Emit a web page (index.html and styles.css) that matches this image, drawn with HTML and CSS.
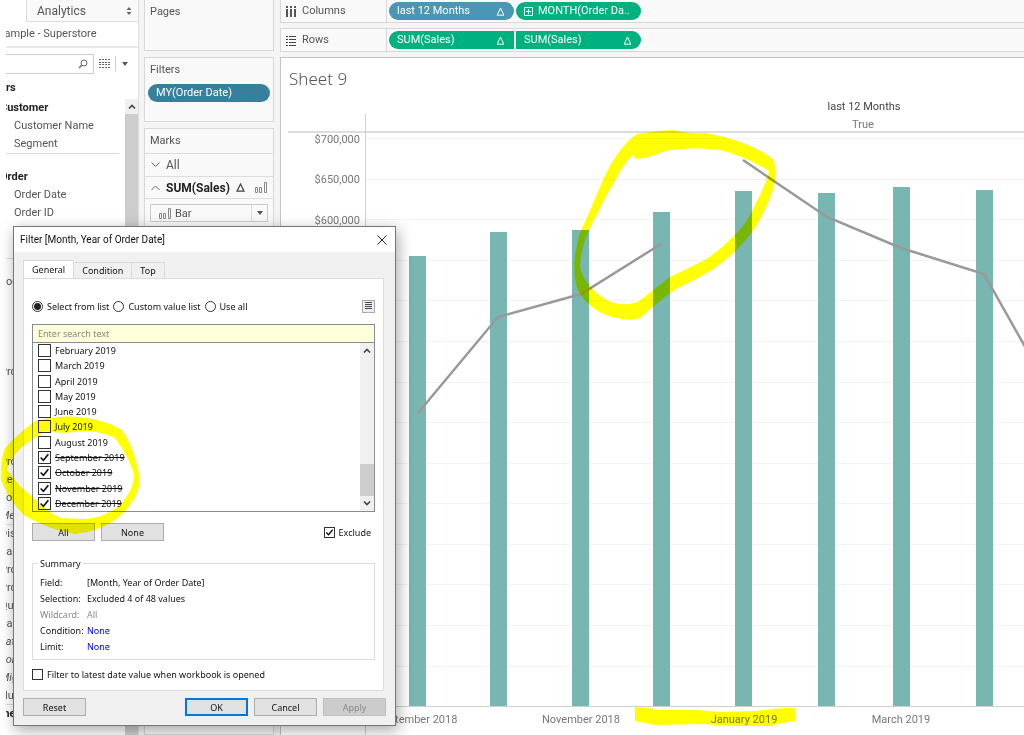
FILE: index.html
```html
<!DOCTYPE html>
<html lang="en">
<head>
    <meta charset="UTF-8">
    <title>Sheet 9</title>
    <link rel="stylesheet" href="styles.css">
</head>
<body>
<div class="workbook">
    <aside class="dataPane">
        <div class="paneTabs">
            <button class="paneTab">Analytics
                <svg width="6" height="8" viewBox="0 0 6 8"><path d="M3 0L5.5 3H.5zM3 8L.5 5h5z" fill="#666"/></svg>
            </button>
        </div>
        <div class="source">Sample - Superstore</div>
        <div class="searchRow">
            <label class="fieldSearch">
                <input type="text" aria-label="Search fields">
                <svg width="10" height="10" viewBox="0 0 10 10" fill="none" stroke="#666"><circle cx="6" cy="4" r="3"/><path d="M4 6L1 9" stroke-width="1.5"/></svg>
            </label>
            <svg width="11" height="9" viewBox="0 0 11 9" fill="none" stroke="#666" stroke-width="1"><path d="M0 .5h11M0 3.5h11M0 5.5h11M0 8.5h11" stroke-dasharray="2 1"/></svg>
            <i class="divider"></i>
            <svg width="6" height="4" viewBox="0 0 6 4"><path d="M0 0h6L3 4z" fill="#555"/></svg>
        </div>
        <div class="tables">rs</div>
        <div class="fields">
            <ul class="fieldList">
                <li class="group">Customer</li>
                <li class="sub">Customer Name</li>
                <li class="sub">Segment</li>
                <li class="gap"></li>
                <li class="group">Order</li>
                <li class="sub">Order Date</li>
                <li class="sub">Order ID</li>
                <li></li>
                <li></li>
                <li class="gap"></li>
                <li>Loc</li>
                <li></li>
                <li></li>
                <li></li>
                <li></li>
                <li>Pro</li>
                <li></li>
                <li></li>
                <li></li>
                <li></li>
                <li>Pro</li>
                <li>Reg</li>
                <li>Top</li>
                <li class="calc last">Mea</li>
                <li>Dis</li>
                <li>Eas</li>
                <li>Pro</li>
                <li>Pro</li>
                <li>Qu</li>
                <li>Sal</li>
                <li class="calc">Lat</li>
                <li class="calc">Lon</li>
                <li class="calc">Mig</li>
                <li class="last">Nu</li>
                <li class="group">me</li>
            </ul>
            <div class="paneScroll">
                <button aria-label="Scroll up"><svg width="8" height="5" viewBox="0 0 8 5" fill="none" stroke="#444" stroke-width="1.6"><path d="M1 4.5l3-3 3 3"/></svg></button>
            </div>
        </div>
    </aside>

    <section class="cards">
        <div class="card pages"><h2>Pages</h2></div>
        <div class="card filters">
            <h2>Filters</h2>
            <button class="pill dark">MY(Order Date)</button>
        </div>
        <div class="card marks">
            <h2>Marks</h2>
            <div class="markRow">
                <svg width="9" height="6" viewBox="0 0 9 6" fill="none" stroke="#666"><path d="M.5.5l4 4 4-4"/></svg>
                <span>All</span>
            </div>
            <div class="markRow active">
                <svg width="9" height="6" viewBox="0 0 9 6" fill="none" stroke="#666"><path d="M.5 5l4-4 4 4"/></svg>
                <span>SUM(Sales)</span>
                <svg class="delta" width="9" height="9" viewBox="0 0 9 9" fill="none" stroke="#444" stroke-width="1.2"><path d="M4.5 1L8 8.2H1z"/></svg>
                <svg width="12" height="11" viewBox="0 0 12 11" fill="none" stroke="#888"><path d="M.5 5.5h2v5h-2zM4.5 5.5h2v5h-2zM9.5.5h2v10h-2z"/></svg>
            </div>
            <div class="markType">
                <svg width="12" height="11" viewBox="0 0 12 11" fill="none" stroke="#888"><path d="M.5 5.5h2v5h-2zM4.5 5.5h2v5h-2zM9.5.5h2v10h-2z"/></svg>
                <select aria-label="Mark type"><option>Bar</option></select>
                <svg class="caret" width="6" height="4" viewBox="0 0 6 4"><path d="M0 0h6L3 4z" fill="#555"/></svg>
            </div>
        </div>
    </section>

    <main class="view">
        <div class="shelf">
            <div class="shelfName">
                <svg width="10" height="11" viewBox="0 0 10 11" fill="none" stroke="#555" stroke-width="2"><path d="M1 0v2M5 0v2M9 0v2M1 3v8M5 3v8M9 3v8"/></svg>
                Columns
            </div>
            <button class="pill blue">last 12 Months
                <svg width="9" height="9" viewBox="0 0 9 9" fill="none" stroke="#fff"><path d="M4.5 1L7.8 8.2H1.2z"/></svg>
            </button>
            <button class="pill green month">
                <svg width="9" height="9" viewBox="0 0 9 9" fill="none" stroke="#fff"><path d="M.5.5h8v8h-8zM2 4.5h5M4.5 2v5"/></svg>
                MONTH(Order Da..
            </button>
        </div>
        <div class="shelf">
            <div class="shelfName">
                <svg width="10" height="11" viewBox="0 0 10 11" fill="none" stroke="#444"><path d="M0 1.5h2M3 1.5h7M0 4.5h2M3 4.5h7M0 7.5h2M3 7.5h7M0 10.5h2M3 10.5h7"/></svg>
                Rows
            </div>
            <button class="pill green flatRight">SUM(Sales)
                <svg width="9" height="9" viewBox="0 0 9 9" fill="none" stroke="#fff"><path d="M4.5 1L7.8 8.2H1.2z"/></svg>
            </button>
            <button class="pill green flatLeft">SUM(Sales)
                <svg width="9" height="9" viewBox="0 0 9 9" fill="none" stroke="#fff"><path d="M4.5 1L7.8 8.2H1.2z"/></svg>
            </button>
        </div>
        <div class="sheet">
            <h1>Sheet 9</h1>
            <svg class="chart" role="img" aria-label="Sales by month">
                <!-- grid -->
                <g stroke="#f3f3f3">
                    <path d="M85 40.5H2000M85 81.5H2000M85 121.5H2000M85 162.5H2000M85 202.5H2000M85 243.5H2000M85 284.5H2000M85 324.5H2000M85 365.5H2000M85 405.5H2000M85 446.5H2000M85 486.5H2000M85 527.5H2000M85 568.5H2000"/>
                </g>
                <path d="M8 34H2000" stroke="#ddd" stroke-width="2"/>
                <path d="M85.5 16V640M85 608.5H2000" stroke="#d0d0d0"/>
                <path d="M137.5 609v4M300.5 609v4M462.5 609v4M620.5 609v4" stroke="#eee"/>
                <!-- bars -->
                <g fill="#78b6b1">
                    <rect x="129" y="158" width="17" height="450"/>
                    <rect x="210" y="134" width="17" height="474"/>
                    <rect x="292" y="132" width="17" height="476"/>
                    <rect x="373" y="114" width="17" height="494"/>
                    <rect x="455" y="93" width="17" height="515"/>
                    <rect x="538" y="95" width="17" height="513"/>
                    <rect x="613" y="89" width="17" height="519"/>
                    <rect x="696" y="92" width="17" height="516"/>
                </g>
                <g fill="none" stroke="#999" stroke-width="2.5">
                    <path d="M138 315L218 219 301 196 381 146"/>
                    <path d="M463 62L547 119 621 150 704 176 748 254"/>
                </g>
                <g class="axis" text-anchor="end">
                    <text x="80" y="45">$700,000</text>
                    <text x="80" y="85">$650,000</text>
                    <text x="80" y="126">$600,000</text>
                </g>
                <g class="axis" text-anchor="middle">
                    <text class="head" x="584" y="12">last 12 Months</text>
                    <text x="583" y="30">True</text>
                    <text x="137" y="625">September 2018</text>
                    <text x="301" y="625">November 2018</text>
                    <text x="464" y="625">January 2019</text>
                    <text x="621" y="625">March 2019</text>
                </g>
            </svg>
        </div>
    </main>
</div>

<form class="dialog" role="dialog" aria-labelledby="dialogTitle">
    <header class="titleBar">
        <span id="dialogTitle">Filter [Month, Year of Order Date]</span>
        <button type="button" aria-label="Close"><svg width="10" height="10" viewBox="0 0 10 10" stroke="#222"><path d="M.5.5l9 9M9.5.5l-9 9"/></svg></button>
    </header>
    <div class="tabs">
        <button type="button" class="tab on">General</button>
        <button type="button" class="tab">Condition</button>
        <button type="button" class="tab">Top</button>
    </div>
    <div class="panel">
        <div class="modes">
            <label><input type="radio" name="mode" checked>Select from list</label>
            <label><input type="radio" name="mode">Custom value list</label>
            <label><input type="radio" name="mode">Use all</label>
            <button type="button" class="menuBn" aria-label="Options"><svg width="7" height="8" viewBox="0 0 7 8" stroke="#3c4858"><path d="M0 .5h7M0 2.5h7M0 4.5h7M0 6.5h7"/></svg></button>
        </div>
        <div class="listBox">
            <input class="search" type="text" placeholder="Enter search text" aria-label="Enter search text">
            <div class="listBody">
                <ul class="months">
                    <li><label><input type="checkbox">February 2019</label></li>
                    <li><label><input type="checkbox">March 2019</label></li>
                    <li><label><input type="checkbox">April 2019</label></li>
                    <li><label><input type="checkbox">May 2019</label></li>
                    <li><label><input type="checkbox">June 2019</label></li>
                    <li><label><input type="checkbox">July 2019</label></li>
                    <li><label><input type="checkbox">August 2019</label></li>
                    <li><label><input type="checkbox" checked><s>September 2019</s></label></li>
                    <li><label><input type="checkbox" checked><s>October 2019</s></label></li>
                    <li><label><input type="checkbox" checked><s>November 2019</s></label></li>
                    <li><label><input type="checkbox" checked><s>December 2019</s></label></li>
                </ul>
                <div class="scroll">
                    <svg width="8" height="5" viewBox="0 0 8 5" fill="none" stroke="#444" stroke-width="1.6"><path d="M1 4.5l3-3 3 3"/></svg>
                    <i class="thumb"></i>
                    <svg width="8" height="5" viewBox="0 0 8 5" fill="none" stroke="#444" stroke-width="1.6"><path d="M1 .5l3 3 3-3"/></svg>
                </div>
            </div>
        </div>
        <div class="pick">
            <button type="button" class="bn">All</button>
            <button type="button" class="bn">None</button>
            <label class="exclude"><input type="checkbox" checked>Exclude</label>
        </div>
        <fieldset class="summary">
            <legend>Summary</legend>
            <dl>
                <dt>Field:</dt><dd>[Month, Year of Order Date]</dd>
                <dt>Selection:</dt><dd>Excluded 4 of 48 values</dd>
                <dt class="off">Wildcard:</dt><dd class="off">All</dd>
                <dt>Condition:</dt><dd><a href="#">None</a></dd>
                <dt>Limit:</dt><dd><a href="#">None</a></dd>
            </dl>
        </fieldset>
        <label class="latest"><input type="checkbox">Filter to latest date value when workbook is opened</label>
    </div>
    <footer class="actions">
        <button type="button" class="bn reset">Reset</button>
        <button type="button" class="bn ok">OK</button>
        <button type="button" class="bn">Cancel</button>
        <button type="button" class="bn" disabled>Apply</button>
    </footer>
</form>

<!-- marker pen -->
<svg class="pen" width="1024" height="735" fill="#ff0" fill-rule="evenodd" aria-hidden="true">
    <path d="M637 134Q655 131 673 130Q690 134 705 133Q730 137 750 146Q765 152 774 160Q777 178 773 190Q766 210 755 228Q735 255 712 270Q695 280 676 289Q660 300 640 318Q632 321 622 319Q605 316 598 311Q583 302 577 288Q572 270 576 250Q578 235 585 222L603 180Q618 147 637 134ZM635 159Q650 158 665 151Q690 146 720 150Q745 156 769 171Q768 180 755 205Q747 224 733 237Q720 250 705 260L670 277L638 302Q620 308 605 299Q596 294 591 287Q582 278 580 267Q580 250 590 228L604 200L618 175Q625 162 634 154Z"/>
    <path d="M35 421Q60 415 78 417Q104 419 122 430Q131 443 135 458Q142 478 138 490Q132 507 115 520Q97 532 75 534Q50 530 25 516Q10 502 1 480Q0 460 5 448Q18 434 35 421ZM45 431Q60 434 75 432Q98 429 115 438Q128 455 134 474Q134 490 120 505Q105 518 85 519L60 518Q48 512 38 502L20 486L7 470Q10 458 22 447Q35 437 45 431Z"/>
    <path d="M635 707L650 708 656 710H697L720 712 755 711 775 709 784 708H795V721L782 723 770 726H735L703 724 655 725 635 721Z"/>
</svg>
</body>
</html>
```
FILE: styles.css
```css
*{
    box-sizing: border-box;
    margin: 0;
    padding: 0;
}
body{
    background: #fff;
    color: #555;
    font: 11px/18px Roboto, "Noto Sans", sans-serif;
    overflow: hidden;
}
button,input,select{
    font: inherit;
    color: inherit;
    border: 0;
    background: none;
}
ul{
    list-style: none;
}
svg{
    flex: none;
}
.workbook{
    display: flex;
    height: 100vh;
    padding-left: 6px;
    background: #f4f4f4;
}

/* data pane */
.dataPane{
    width: 132px;
    flex: none;
    overflow: hidden;
    display: flex;
    flex-direction: column;
    background: #fff;
    box-shadow: -6px 0 #fff, 1px 0 #ddd;
}
.paneTabs{
    display: flex;
    justify-content: flex-end;
    height: 22px;
    padding-left: 20px;
}
.paneTab{
    flex: 1;
    display: flex;
    align-items: center;
    justify-content: space-between;
    padding: 0 6px 0 10px;
    font-size: 12px;
    background: #f9f9f9;
    border: solid #ddd;
    border-width: 0 0 1px 1px;
}
.source{
    height: 26px;
    line-height: 24px;
    margin-left: -8px;
    border-bottom: 2px solid #e8e8e8;
    white-space: nowrap;
}
.searchRow{
    display: flex;
    align-items: center;
    height: 31px;
    gap: 5px;
}
.fieldSearch{
    display: flex;
    align-items: center;
    width: 88px;
    height: 20px;
    padding-right: 5px;
    border: 1px solid #ccc;
    border-left: 0;
}
.fieldSearch input{
    flex: 1;
    min-width: 0;
}
.divider{
    width: 1px;
    height: 15px;
    margin-right: 1px;
    background: #ccc;
}
.tables{
    height: 20px;
    font-weight: bold;
    color: #222;
}
.fields{
    flex: 1;
    min-height: 0;
    display: flex;
}
.fieldList{
    flex: 1;
    overflow: hidden;
    padding-right: 6px;
}
.fieldList li{
    height: 18px;
    margin-left: -6px;
}
.fieldList .sub{
    padding-left: 14px;
}
.fieldList .group{
    font-weight: bold;
    color: #222;
}
.fieldList .gap{
    height: 15px;
    border-top: 1px solid #ddd;
}
.fieldList .calc{
    font-style: italic;
}
.fieldList .last{
    border-bottom: 1px solid #ddd;
}
.paneScroll{
    width: 13px;
    background: #cdcdcd;
}
.paneScroll button{
    display: flex;
    align-items: center;
    justify-content: center;
    width: 13px;
    height: 15px;
    background: #f0f0f0;
}

/* cards */
.cards{
    width: 130px;
    flex: none;
    margin: 0 6px;
    display: flex;
    flex-direction: column;
    gap: 6px;
}
.card{
    background: #f9f9f9;
    border: 1px solid #d8d8d8;
}
.card h2{
    padding-left: 5px;
    font-size: 11px;
    font-weight: normal;
    line-height: 24px;
}
.pages{
    height: 51px;
    border-top: 0;
}
.filters{
    height: 65px;
}
.marks{
    flex: 1;
}
.pill{
    display: flex;
    align-items: center;
    justify-content: space-between;
    width: 125px;
    height: 18px;
    padding: 0 9px 0 8px;
    border-radius: 9px;
    color: #fff;
    font-size: 11px;
    white-space: nowrap;
}
.pill.dark{
    width: 122px;
    margin: 2px 3px;
    background: #377f9c;
}
.pill.blue{
    background: #4a96b5;
}
.pill.green{
    background: #00b180;
}
.pill.flatRight{
    border-radius: 9px 0 0 9px;
}
.pill.flatLeft{
    border-radius: 0 9px 9px 0;
}
.markRow{
    display: flex;
    align-items: center;
    gap: 6px;
    height: 23px;
    padding: 0 8px 0 6px;
    border-top: 1px solid #ddd;
    font-size: 12px;
}
.markRow.active{
    border-bottom: 1px solid #ddd;
    color: #222;
    font-weight: bold;
}
.delta{
    margin: 0 4px 0 auto;
}
.markType{
    display: flex;
    align-items: center;
    gap: 4px;
    height: 18px;
    margin: 5px;
    padding: 0 0 0 8px;
    border: 1px solid #ccc;
}
.markType select{
    appearance: none;
    flex: 1;
    height: 16px;
    border-right: 1px solid #ddd;
}
.caret{
    margin: 0 4px 0 1px;
}

/* shelves and sheet */
.view{
    flex: 1;
    min-width: 0;
    display: flex;
    flex-direction: column;
    gap: 5px;
}
.shelf{
    display: flex;
    align-items: center;
    gap: 2px;
    height: 24px;
    background: #f9f9f9;
    border: 1px solid #d8d8d8;
    border-right: 0;
}
.shelf:first-child{
    height: 23px;
    border-top: 0;
}
.shelfName{
    display: flex;
    align-items: center;
    gap: 6px;
    width: 106px;
    height: 100%;
    padding-left: 5px;
    border-right: 1px solid #d8d8d8;
}
.pill.month{
    justify-content: flex-start;
    gap: 5px;
}
.sheet{
    flex: 1;
    min-height: 0;
    display: flex;
    flex-direction: column;
    background: #fff;
    border: solid #c4c4c4;
    border-width: 1px 0 0 1px;
}
.sheet h1{
    padding: 9px 8px 0;
    font-family: "Noto Sans", sans-serif;
    font-size: 17px;
    font-weight: 300;
    line-height: 24px;
    height: 40px;
}
.chart{
    flex: 1;
    width: calc(100% + 1px);
    min-height: 0;
    margin-left: -1px;
}
.axis{
    fill: #777;
    font-size: 11px;
}
.axis .head{
    fill: #444;
}

/* filter dialog */
.dialog{
    position: absolute;
    left: 13px;
    top: 226px;
    width: 383px;
    border: 1px solid #777;
    background: #f0f0f0;
    box-shadow: 2px 4px 14px rgba(0,0,0,0.35);
    color: #111;
    font: 9px/15px "Noto Sans", "Open Sans", sans-serif;
}
.titleBar{
    display: flex;
    align-items: center;
    justify-content: space-between;
    height: 25px;
    padding: 0 8px 0 6px;
    background: #fff;
    font-family: Roboto, "Noto Sans", sans-serif;
    font-size: 10px;
}
.titleBar button{
    display: flex;
}
.tabs{
    display: flex;
    align-items: flex-end;
    height: 26px;
    padding: 0 9px;
}
.tab{
    height: 16px;
    padding: 0 8px;
    border: 1px solid #d9d9d9;
    border-width: 1px 1px 0 0;
}
.tab.on{
    height: 18px;
    background: #fff;
    border-left-width: 1px;
}
.panel{
    margin: 0 11px 0 9px;
    padding: 18px 8px 8px;
    background: #fff;
    border: 1px solid #dcdcdc;
}
.modes{
    display: flex;
    align-items: center;
    gap: 4px;
    height: 18px;
    margin-bottom: 9px;
}
label{
    display: flex;
    align-items: center;
    white-space: nowrap;
}
input[type=radio],input[type=checkbox]{
    appearance: none;
    flex: none;
    width: 11px;
    height: 11px;
    margin-right: 4px;
    border: 1px solid #333;
    background: #fff;
}
input[type=radio]{
    border-radius: 50%;
}
input[type=radio]:checked{
    background: radial-gradient(#222 3px, #fff 4px);
}
input[type=checkbox]:checked{
    background: url("data:image/svg+xml,%3Csvg xmlns='http://www.w3.org/2000/svg' viewBox='0 0 10 10'%3E%3Cpath d='M1.5 5l2.5 2.5 4.5-5.5' fill='none' stroke='%23111' stroke-width='1.5'/%3E%3C/svg%3E") center/contain no-repeat;
}
.menuBn{
    display: flex;
    align-items: center;
    justify-content: center;
    width: 13px;
    height: 13px;
    margin-left: auto;
    border: 1px solid #aaa;
    background: #eee;
}
.listBox{
    border: 1px solid #888c98;
}
.search{
    display: block;
    width: 100%;
    height: 18px;
    padding: 0 5px;
    background: #ffffdc;
    border-bottom: 1px solid #888c98;
}
.search::placeholder{
    color: #888a70;
}
.listBody{
    display: flex;
    height: 168px;
}
.months{
    flex: 1;
    display: flex;
    flex-direction: column;
}
.months li{
    flex: 1;
    display: flex;
    padding-left: 5px;
}
.months input[type=checkbox]{
    width: 13px;
    height: 13px;
}
.scroll{
    display: flex;
    flex-direction: column;
    align-items: center;
    width: 14px;
    padding: 5px 0;
    background: #f0f0f0;
}
.thumb{
    width: 100%;
    height: 32px;
    margin: auto 0 5px;
    background: #cdcdcd;
}
.pick{
    display: flex;
    gap: 6px;
    margin: 11px 0 15px;
}
.bn{
    width: 63px;
    height: 18px;
    border: 1px solid #adadad;
    background: #e1e1e1;
}
.bn:disabled{
    color: #888;
    background: #ccc;
    border-color: #bfbfbf;
}
.exclude{
    margin-left: auto;
    padding-right: 4px;
}
.summary{
    border: 1px solid #dcdcdc;
    padding: 4px 7px;
}
.summary legend{
    padding: 0 2px;
    margin-left: -2px;
}
.summary dl{
    display: grid;
    grid-template-columns: 47px 1fr;
    line-height: 16px;
}
.off{
    color: #888;
}
.summary a{
    color: #00f;
    text-decoration: none;
}
.latest{
    margin-top: 7px;
}
.actions{
    display: flex;
    gap: 6px;
    padding: 7px 9px 9px;
}
.actions .reset{
    margin-right: auto;
}
.actions .ok{
    border: 2px solid #0078d7;
}

.pen{
    position: absolute;
    left: 0;
    top: 0;
    mix-blend-mode: multiply;
    pointer-events: none;
}
```
